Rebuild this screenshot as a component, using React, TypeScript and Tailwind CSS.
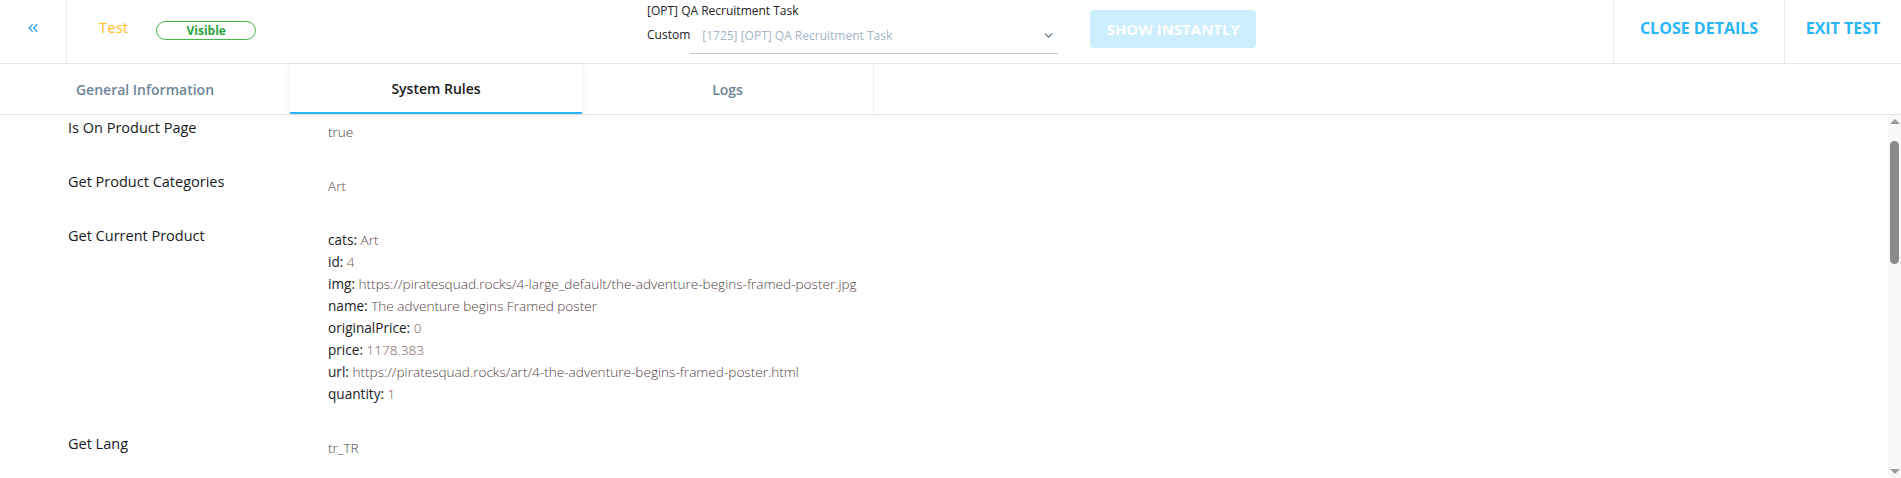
import React from 'react';
import { ChevronsLeft, ChevronDown } from 'lucide-react';

const productFields = [
  { key: 'cats', value: 'Art', kind: 'text' },
  { key: 'id', value: '4', kind: 'num' },
  { key: 'img', value: 'https://piratesquad.rocks/4-large_default/the-adventure-begins-framed-poster.jpg', kind: 'text' },
  { key: 'name', value: 'The adventure begins Framed poster', kind: 'text' },
  { key: 'originalPrice', value: '0', kind: 'num' },
  { key: 'price', value: '1178.383', kind: 'num' },
  { key: 'url', value: 'https://piratesquad.rocks/art/4-the-adventure-begins-framed-poster.html', kind: 'text' },
  { key: 'quantity', value: '1', kind: 'num' },
];

const tabs = [
  { id: 'general', label: 'General Information' },
  { id: 'rules', label: 'System Rules' },
  { id: 'logs', label: 'Logs' },
];

const Row: React.FC<{ label: string; children: React.ReactNode }> = ({ label, children }) => (
  <div className="flex items-start mb-[28px]">
    <div className="w-[260px] shrink-0 text-[14.5px] leading-[22px] font-medium text-[#16191c]">{label}</div>
    <div className="mt-[4px] text-[13.6px] leading-[22px]">{children}</div>
  </div>
);

const App: React.FC = () => {
  const active = 'rules';

  return (
    <div
      className="h-[478px] w-full flex flex-col bg-white overflow-hidden"
      style={{ fontFamily: '"Open Sans", "Noto Sans", sans-serif' }}
    >
      {/* top bar */}
      <div className="flex h-[64px] shrink-0 border-b border-[#e4e6e8]">
        <button className="w-[67px] shrink-0 border-r border-[#e8eef3] flex items-center justify-center text-[#2196f3]">
          <ChevronsLeft size={16} strokeWidth={1.8} className="-mt-[8px]" />
        </button>
        <div className="w-[580px] shrink-0 flex items-center pl-[32px]">
          <span className="text-[15px] text-[#ffbd1f] -mt-[9px]">Test</span>
          <span className="ml-[28px] w-[100px] h-[19px] rounded-full border border-[#45b649] flex items-center justify-center text-[12px] font-bold text-[#28a33c] -mt-[2px]">
            Visible
          </span>
        </div>
        <div className="flex flex-col shrink-0">
          <div className="h-[22px] leading-[22px] text-[12px] text-[#222]">[OPT] QA Recruitment Task</div>
          <div className="flex items-start">
            <span className="mt-[5px] text-[12px] leading-[16px] text-[#222]">Custom</span>
            <div className="w-[368px] h-[32px] border-b border-[#b9c8d4] pl-[12px] pr-[3px] pb-[4px] flex items-center justify-between">
              <span className="text-[12px] text-[#a3b5c6]">[1725] [OPT] QA Recruitment Task</span>
              <ChevronDown size={13} strokeWidth={2.4} className="text-[#5b7186]" />
            </div>
          </div>
        </div>
        <div className="ml-[32px] mt-[10px] h-[38px] w-[166px] rounded-[4px] bg-[#cdeefc] flex items-center justify-center text-[15px] font-bold text-white uppercase">
          Show Instantly
        </div>
        <div className="flex-1" />
        <button className="w-[171px] shrink-0 border-l border-[#e8eef3] flex items-center justify-center text-[16px] font-bold text-[#29b6f6] uppercase">
          <span className="-mt-[8px]">Close Details</span>
        </button>
        <button className="w-[117px] shrink-0 border-l border-[#e8eef3] flex items-center justify-center text-[16px] font-bold text-[#29b6f6] uppercase">
          <span className="-mt-[8px]">Exit Test</span>
        </button>
      </div>

      {/* tabs */}
      <div className="flex h-[51px] shrink-0 border-b border-[#e4e6e8]">
        {tabs.map((tab) => (
          <div
            key={tab.id}
            className={
              tab.id === active
                ? 'w-[292px] flex items-center justify-center text-[14px] font-semibold text-[#1a1a1a] border-b-[2px] border-[#29b6f6] shadow-[0_2px_8px_rgba(0,0,0,0.07)] bg-white'
                : tab.id === 'logs'
                ? 'w-[292px] flex items-center justify-center text-[14px] font-semibold text-[#6e8599] border-r border-[#eceff1]'
                : 'w-[290px] flex items-center justify-center text-[14px] font-semibold text-[#6e8599]'
            }
          >
            {tab.label}
          </div>
        ))}
      </div>

      {/* rules list */}
      <div className="relative flex-1 overflow-hidden">
        <div className="h-full overflow-y-auto [scrollbar-width:none]">
          <div className="pl-[68px] pt-[2px] pb-[560px]">
            <Row label="Is On Product Page">
              <span className="font-light text-[#444]">true</span>
            </Row>
            <Row label="Get Product Categories">
              <span className="font-light text-[#5e4b48]">Art</span>
            </Row>
            <Row label="Get Current Product">
              {productFields.map((f) => (
                <div key={f.key}>
                  <span className="text-[#202326]">{f.key}: </span>
                  <span className={f.kind === 'num' ? 'font-light text-[#7d5853]' : 'font-light text-[#54433f]'}>{f.value}</span>
                </div>
              ))}
            </Row>
            <Row label="Get Lang">
              <span className="font-light text-[#444]">tr_TR</span>
            </Row>
          </div>
        </div>

        {/* scrollbar */}
        <div className="absolute right-0 top-0 bottom-0 w-[13px] bg-[#f8f8f8] flex flex-col items-center">
          <div className="mt-[4px] w-0 h-0 border-x-[5px] border-x-transparent border-b-[5px] border-b-[#9a9a9a]" />
          <div className="mt-[17px] w-[9px] h-[123px] rounded-full bg-[#8a8a8a]" />
          <div className="flex-1" />
          <div className="mb-[4px] w-0 h-0 border-x-[5px] border-x-transparent border-t-[5px] border-t-[#9a9a9a]" />
        </div>
      </div>
    </div>
  );
};

export default App;
